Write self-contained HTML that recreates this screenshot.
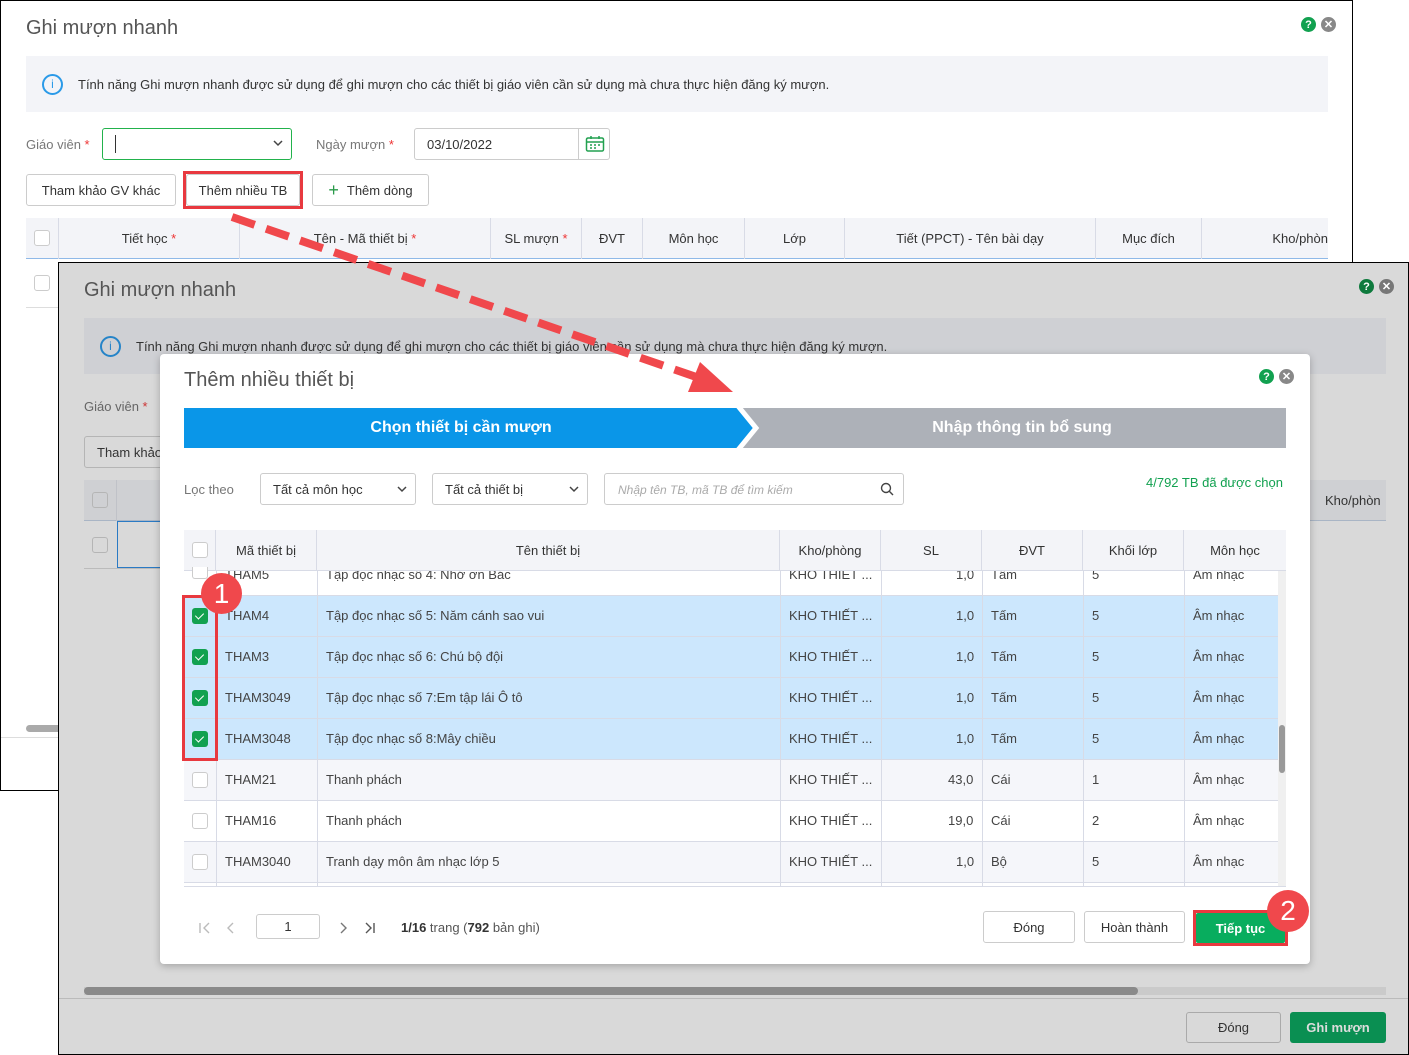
<!DOCTYPE html>
<html><head><meta charset="utf-8"><style>
*{box-sizing:border-box;margin:0;padding:0}
body{width:1409px;height:1055px;position:relative;overflow:hidden;background:#fff;font-family:"Liberation Sans",sans-serif;font-size:13px;color:#333}
.a{position:absolute}
.btn{position:absolute;border:1px solid #ccc;border-radius:3px;background:#fff;display:flex;align-items:center;justify-content:center;font-size:13px;color:#333}
.cb{position:absolute;width:16px;height:16px;border:1px solid #ccc;border-radius:3px;background:#fff}
.cbk{position:absolute;width:16px;height:16px;border-radius:3px;background:#12a150}
.cbk:after{content:"";position:absolute;left:5px;top:3px;width:4px;height:7px;border:solid #fff;border-width:0 1.5px 1.5px 0;transform:rotate(45deg)}
.th{position:absolute;top:0;height:100%;display:flex;align-items:center;justify-content:center;font-size:13px;color:#333;border-right:1px solid #d8dbe6}
.ic{position:absolute;width:15px;height:15px;border-radius:50%;color:#fff;font-size:11px;font-weight:bold;display:flex;align-items:center;justify-content:center}
.row{position:absolute;left:0;width:1094px;height:41px;border-bottom:1px solid #d8dbe6}
.row span{position:absolute;top:0;line-height:40px;font-size:13px;color:#444;white-space:nowrap}
.vl{position:absolute;top:0;width:1px;height:100%;background:#d8dbe6}
</style></head><body>

<!-- back window -->
<div class="a" style="left:0;top:0;width:1353px;height:791px;border:1px solid #000;background:#fff"></div>
<div class="a" style="left:26px;top:17px;font-size:20px;color:#555">Ghi mượn nhanh</div>
<div class="ic" style="left:1301px;top:17px;background:#12a150">?</div>
<div class="ic" style="left:1321px;top:17px;background:#888">✕</div>
<div class="a" style="left:26px;top:56px;width:1302px;height:56px;background:#f3f4f8"></div>
<div class="a" style="left:42px;top:74px;width:21px;height:21px;border:2px solid #2a9ae8;border-radius:50%;color:#2a9ae8;font-size:12px;text-align:center;line-height:17px">i</div>
<div class="a" style="left:78px;top:77px;color:#333">Tính năng Ghi mượn nhanh được sử dụng để ghi mượn cho các thiết bị giáo viên cần sử dụng mà chưa thực hiện đăng ký mượn.</div>
<div class="a" style="left:26px;top:137px;color:#777">Giáo viên <span style="color:#e33">*</span></div>
<div class="a" style="left:102px;top:128px;width:190px;height:32px;border:1px solid #22b24c;border-radius:3px"></div>
<div class="a" style="left:115px;top:135px;width:1px;height:18px;background:#333"></div>
<svg class="a" style="left:273px;top:140px" width="10" height="7"><polyline points="1,1 5,5 9,1" fill="none" stroke="#444" stroke-width="1.5"/></svg>
<div class="a" style="left:316px;top:137px;color:#777">Ngày mượn <span style="color:#e33">*</span></div>
<div class="a" style="left:414px;top:128px;width:196px;height:32px;border:1px solid #ccc;border-radius:3px"></div>
<div class="a" style="left:578px;top:128px;width:1px;height:32px;background:#ccc"></div>
<div class="a" style="left:427px;top:137px;color:#333">03/10/2022</div>
<svg class="a" style="left:585px;top:135px" width="20" height="18" viewBox="0 0 20 18"><rect x="1.5" y="3" width="17" height="13" rx="1.5" fill="none" stroke="#22a150" stroke-width="1.5"/><line x1="1.5" y1="7" x2="18.5" y2="7" stroke="#22a150" stroke-width="1.5"/><line x1="6" y1="1" x2="6" y2="4" stroke="#22a150" stroke-width="1.5"/><line x1="14" y1="1" x2="14" y2="4" stroke="#22a150" stroke-width="1.5"/><path d="M5 10h2M9 10h2M13 10h2M5 13h2M9 13h2" stroke="#22a150" stroke-width="1.5"/></svg>
<div class="btn" style="left:26px;top:174px;width:150px;height:32px">Tham khảo GV khác</div>
<div class="btn" style="left:186px;top:174px;width:114px;height:32px">Thêm nhiều TB</div>
<div class="a" style="left:183px;top:171px;width:120px;height:38px;border:3px solid #e8393f"></div>
<div class="btn" style="left:312px;top:174px;width:117px;height:32px"><span style="color:#2a9a4a;font-size:18px;margin-right:8px">+</span>Thêm dòng</div>
<div class="a" style="left:26px;top:218px;width:1302px;height:41px;background:#f3f4f8;border-bottom:1px solid #8fb9e8"></div>
<div class="cb" style="left:34px;top:230px"></div>
<div class="a" style="left:26px;top:218px;width:1302px;height:41px">
<div class="th" style="left:0;width:33px"></div>
<div class="th" style="left:33px;width:181px">Tiết học&nbsp;<span style="color:#e33">*</span></div>
<div class="th" style="left:214px;width:251px">Tên - Mã thiết bị&nbsp;<span style="color:#e33">*</span></div>
<div class="th" style="left:465px;width:91px">SL mượn&nbsp;<span style="color:#e33">*</span></div>
<div class="th" style="left:556px;width:61px">ĐVT</div>
<div class="th" style="left:617px;width:102px">Môn học</div>
<div class="th" style="left:719px;width:100px">Lớp</div>
<div class="th" style="left:819px;width:251px">Tiết (PPCT) - Tên bài dạy</div>
<div class="th" style="left:1070px;width:106px">Mục đích</div>
<div class="th" style="left:1176px;width:126px;border:none;justify-content:flex-end">Kho/phòn</div>
</div>
<div class="cb" style="left:34px;top:275px"></div>
<div class="a" style="left:26px;top:307px;width:40px;height:1px;background:#ddd"></div>
<div class="a" style="left:26px;top:725px;width:36px;height:7px;background:#aaa;border-radius:4px"></div>
<div class="a" style="left:1px;top:737px;width:58px;height:1px;background:#ddd"></div>

<!-- second window (dimmed) -->
<div class="a" style="left:58px;top:262px;width:1351px;height:793px;border:1px solid #000;background:#d9d9d9"></div>
<div class="a" style="left:84px;top:279px;font-size:20px;color:#555">Ghi mượn nhanh</div>
<div class="ic" style="left:1359px;top:279px;background:#0e7a3d">?</div>
<div class="ic" style="left:1379px;top:279px;background:#777">✕</div>
<div class="a" style="left:84px;top:318px;width:1302px;height:56px;background:#cfd0d4"></div>
<div class="a" style="left:100px;top:336px;width:21px;height:21px;border:2px solid #2684c8;border-radius:50%;color:#2684c8;font-size:12px;text-align:center;line-height:17px">i</div>
<div class="a" style="left:136px;top:339px;color:#333">Tính năng Ghi mượn nhanh được sử dụng để ghi mượn cho các thiết bị giáo viên cần sử dụng mà chưa thực hiện đăng ký mượn.</div>
<div class="a" style="left:84px;top:399px;color:#666">Giáo viên <span style="color:#c33">*</span></div>
<div class="a" style="left:84px;top:436px;width:100px;height:32px;border:1px solid #b5b5b5;border-radius:3px;background:#d9d9d9;padding:8px 12px;color:#333">Tham khảo</div>
<div class="a" style="left:84px;top:480px;width:1302px;height:41px;background:#cfd0d3;border-bottom:1px solid #a9b5c5"></div>
<div class="a" style="left:116px;top:480px;width:1px;height:41px;background:#c0c2c8"></div>
<div class="a" style="left:1325px;top:493px;color:#333">Kho/phòn</div>
<div class="a" style="left:92px;top:492px;width:16px;height:16px;border:1px solid #b5b5b5;border-radius:3px"></div>
<div class="a" style="left:92px;top:537px;width:16px;height:16px;border:1px solid #b5b5b5;border-radius:3px"></div>
<div class="a" style="left:117px;top:521px;width:60px;height:47px;border:1px solid #2a7ac4"></div>
<div class="a" style="left:84px;top:568px;width:80px;height:1px;background:#bbb"></div>
<div class="a" style="left:84px;top:987px;width:1302px;height:8px;background:#cacaca"></div>
<div class="a" style="left:84px;top:987px;width:1054px;height:8px;background:#8a8a8a;border-radius:4px"></div>
<div class="a" style="left:59px;top:998px;width:1349px;height:1px;background:#bbb"></div>
<div class="a" style="left:1186px;top:1012px;width:95px;height:31px;border:1px solid #aaa;border-radius:3px;display:flex;align-items:center;justify-content:center;color:#333">Đóng</div>
<div class="a" style="left:1290px;top:1012px;width:96px;height:31px;border-radius:3px;background:#0a8f52;display:flex;align-items:center;justify-content:center;color:#ddd;font-weight:bold">Ghi mượn</div>

<!-- modal -->
<div class="a" style="left:160px;top:354px;width:1150px;height:610px;background:#fff;border-radius:4px;box-shadow:0 2px 8px rgba(0,0,0,.25)"></div>
<div class="a" style="left:184px;top:369px;font-size:20px;color:#555">Thêm nhiều thiết bị</div>
<div class="ic" style="left:1259px;top:369px;background:#12a150">?</div>
<div class="ic" style="left:1279px;top:369px;background:#888">✕</div>
<svg class="a" style="left:184px;top:408px" width="1102" height="40"><rect x="0" y="0" width="1102" height="40" fill="#adb1b8"/><polygon points="0,0 554,0 572,20 554,40 0,40" fill="#0a96e8"/><polyline points="554,-2 572,20 554,42" fill="none" stroke="#fff" stroke-width="5"/></svg>
<div class="a" style="left:184px;top:408px;width:554px;height:40px;line-height:40px;text-align:center;color:#fff;font-size:16px;font-weight:bold">Chọn thiết bị cần mượn</div>
<div class="a" style="left:758px;top:408px;width:528px;height:40px;line-height:40px;text-align:center;color:#fff;font-size:16px;font-weight:bold">Nhập thông tin bổ sung</div>
<div class="a" style="left:184px;top:482px;color:#777">Lọc theo</div>
<div class="a" style="left:260px;top:473px;width:156px;height:32px;border:1px solid #ccc;border-radius:3px;padding:8px 12px;color:#333">Tất cả môn học</div>
<svg class="a" style="left:397px;top:486px" width="10" height="7"><polyline points="1,1 5,5 9,1" fill="none" stroke="#444" stroke-width="1.5"/></svg>
<div class="a" style="left:432px;top:473px;width:156px;height:32px;border:1px solid #ccc;border-radius:3px;padding:8px 12px;color:#333">Tất cả thiết bị</div>
<svg class="a" style="left:569px;top:486px" width="10" height="7"><polyline points="1,1 5,5 9,1" fill="none" stroke="#444" stroke-width="1.5"/></svg>
<div class="a" style="left:604px;top:473px;width:300px;height:32px;border:1px solid #ccc;border-radius:3px;padding:9px 13px;color:#aaa;font-style:italic;font-size:12px">Nhập tên TB, mã TB để  tìm kiếm</div>
<svg class="a" style="left:880px;top:482px" width="14" height="14"><circle cx="6" cy="6" r="4.5" fill="none" stroke="#444" stroke-width="1.4"/><line x1="9.3" y1="9.3" x2="13" y2="13" stroke="#444" stroke-width="1.4"/></svg>
<div class="a" style="left:1146px;top:475px;color:#12a150">4/792 TB đã được chọn</div>

<div class="a" style="left:184px;top:530px;width:1102px;height:41px;background:#f3f4f8;border-bottom:1px solid #d8dbe6">
<div class="th" style="left:0;width:32px"></div>
<div class="th" style="left:32px;width:101px">Mã thiết bị</div>
<div class="th" style="left:133px;width:463px">Tên thiết bị</div>
<div class="th" style="left:596px;width:101px">Kho/phòng</div>
<div class="th" style="left:697px;width:101px">SL</div>
<div class="th" style="left:798px;width:101px">ĐVT</div>
<div class="th" style="left:899px;width:101px">Khối lớp</div>
<div class="th" style="left:1000px;width:102px;border:none">Môn học</div>
</div>
<div class="cb" style="left:192px;top:542px"></div>

<div class="a" style="left:184px;top:571px;width:1102px;height:316px;overflow:hidden;border-bottom:1px solid #d8dbe6">
<div class="a" style="left:0;top:-16px;width:1094px;height:400px">
<div class="row" style="top:0;background:#fff"><span style="left:41px">THAM5</span><span style="left:142px">Tập đọc nhạc số 4: Nhớ ơn Bác</span><span style="left:605px">KHO THIẾT ...</span><span style="left:772px">1,0</span><span style="left:807px">Tấm</span><span style="left:908px">5</span><span style="left:1009px">Âm nhạc</span></div>
<div class="row" style="top:41px;background:#cce7fd"><span style="left:41px">THAM4</span><span style="left:142px">Tập đọc nhạc số 5: Năm cánh sao vui</span><span style="left:605px">KHO THIẾT ...</span><span style="left:772px">1,0</span><span style="left:807px">Tấm</span><span style="left:908px">5</span><span style="left:1009px">Âm nhạc</span></div>
<div class="row" style="top:82px;background:#cce7fd"><span style="left:41px">THAM3</span><span style="left:142px">Tập đọc nhạc số 6: Chú bộ đội</span><span style="left:605px">KHO THIẾT ...</span><span style="left:772px">1,0</span><span style="left:807px">Tấm</span><span style="left:908px">5</span><span style="left:1009px">Âm nhạc</span></div>
<div class="row" style="top:123px;background:#cce7fd"><span style="left:41px">THAM3049</span><span style="left:142px">Tập đọc nhạc số 7:Em tập lái Ô tô</span><span style="left:605px">KHO THIẾT ...</span><span style="left:772px">1,0</span><span style="left:807px">Tấm</span><span style="left:908px">5</span><span style="left:1009px">Âm nhạc</span></div>
<div class="row" style="top:164px;background:#cce7fd"><span style="left:41px">THAM3048</span><span style="left:142px">Tập đọc nhạc số 8:Mây chiều</span><span style="left:605px">KHO THIẾT ...</span><span style="left:772px">1,0</span><span style="left:807px">Tấm</span><span style="left:908px">5</span><span style="left:1009px">Âm nhạc</span></div>
<div class="row" style="top:205px;background:#f5f6fa"><span style="left:41px">THAM21</span><span style="left:142px">Thanh phách</span><span style="left:605px">KHO THIẾT ...</span><span style="left:764px">43,0</span><span style="left:807px">Cái</span><span style="left:908px">1</span><span style="left:1009px">Âm nhạc</span></div>
<div class="row" style="top:246px;background:#fff"><span style="left:41px">THAM16</span><span style="left:142px">Thanh phách</span><span style="left:605px">KHO THIẾT ...</span><span style="left:764px">19,0</span><span style="left:807px">Cái</span><span style="left:908px">2</span><span style="left:1009px">Âm nhạc</span></div>
<div class="row" style="top:287px;background:#f5f6fa"><span style="left:41px">THAM3040</span><span style="left:142px">Tranh dạy môn âm nhạc lớp 5</span><span style="left:605px">KHO THIẾT ...</span><span style="left:772px">1,0</span><span style="left:807px">Bộ</span><span style="left:908px">5</span><span style="left:1009px">Âm nhạc</span></div>
<div class="row" style="top:328px;background:#fff"></div>
<div class="vl" style="left:32px"></div><div class="vl" style="left:133px"></div><div class="vl" style="left:596px"></div><div class="vl" style="left:697px"></div><div class="vl" style="left:798px"></div><div class="vl" style="left:899px"></div><div class="vl" style="left:1000px"></div>
</div>
<div class="a" style="left:1094px;top:0;width:8px;height:316px;background:#f0f0f0"></div>
<div class="a" style="left:1095px;top:154px;width:6px;height:48px;background:#999;border-radius:3px"></div>
</div>
<div class="cb" style="left:192px;top:567px;height:12px;border-top:none;border-radius:0 0 3px 3px"></div>
<div class="cbk" style="left:192px;top:608px"></div>
<div class="cbk" style="left:192px;top:649px"></div>
<div class="cbk" style="left:192px;top:690px"></div>
<div class="cbk" style="left:192px;top:731px"></div>
<div class="cb" style="left:192px;top:772px"></div>
<div class="cb" style="left:192px;top:813px"></div>
<div class="cb" style="left:192px;top:854px"></div>

<!-- pagination -->
<svg class="a" style="left:198px;top:921px" width="180" height="14"><path d="M2 2v10M11 2l-5 5 5 5" fill="none" stroke="#bbb" stroke-width="1.4"/><path d="M35 2l-5 5 5 5" fill="none" stroke="#bbb" stroke-width="1.4"/><path d="M143 2l5 5-5 5" fill="none" stroke="#777" stroke-width="1.4"/><path d="M168 2l5 5-5 5M176 2v10" fill="none" stroke="#555" stroke-width="1.4"/></svg>
<div class="a" style="left:256px;top:914px;width:64px;height:25px;border:1px solid #ccc;border-radius:3px;text-align:center;line-height:23px;color:#333">1</div>
<div class="a" style="left:401px;top:920px;color:#555"><b style="color:#333">1/16</b> trang (<b style="color:#333">792</b> bản ghi)</div>
<div class="btn" style="left:983px;top:911px;width:92px;height:32px">Đóng</div>
<div class="btn" style="left:1084px;top:911px;width:101px;height:32px">Hoàn thành</div>
<div class="a" style="left:1196px;top:913px;width:89px;height:30px;background:#08ad5e;border-radius:2px;color:#fff;font-weight:bold;display:flex;align-items:center;justify-content:center">Tiếp tục</div>
<div class="a" style="left:1193px;top:910px;width:95px;height:36px;border:3px solid #e8393f"></div>

<!-- annotations -->
<div class="a" style="left:182px;top:595px;width:36px;height:166px;border:3px solid #e8393f"></div>
<div class="a" style="left:201px;top:573px;width:41px;height:41px;border-radius:50%;background:#f0484c;color:#fff;font-size:28px;text-align:center;line-height:41px">1</div>
<div class="a" style="left:1267px;top:890px;width:42px;height:42px;border-radius:50%;background:#f0484c;color:#fff;font-size:28px;text-align:center;line-height:42px">2</div>
<svg class="a" style="left:0;top:0" width="1409" height="1055"><line x1="232" y1="217" x2="705" y2="380" stroke="#f0484c" stroke-width="8" stroke-dasharray="24,12"/><polygon points="733,392 700,362 688,392" fill="#f0484c"/></svg>
</body></html>
